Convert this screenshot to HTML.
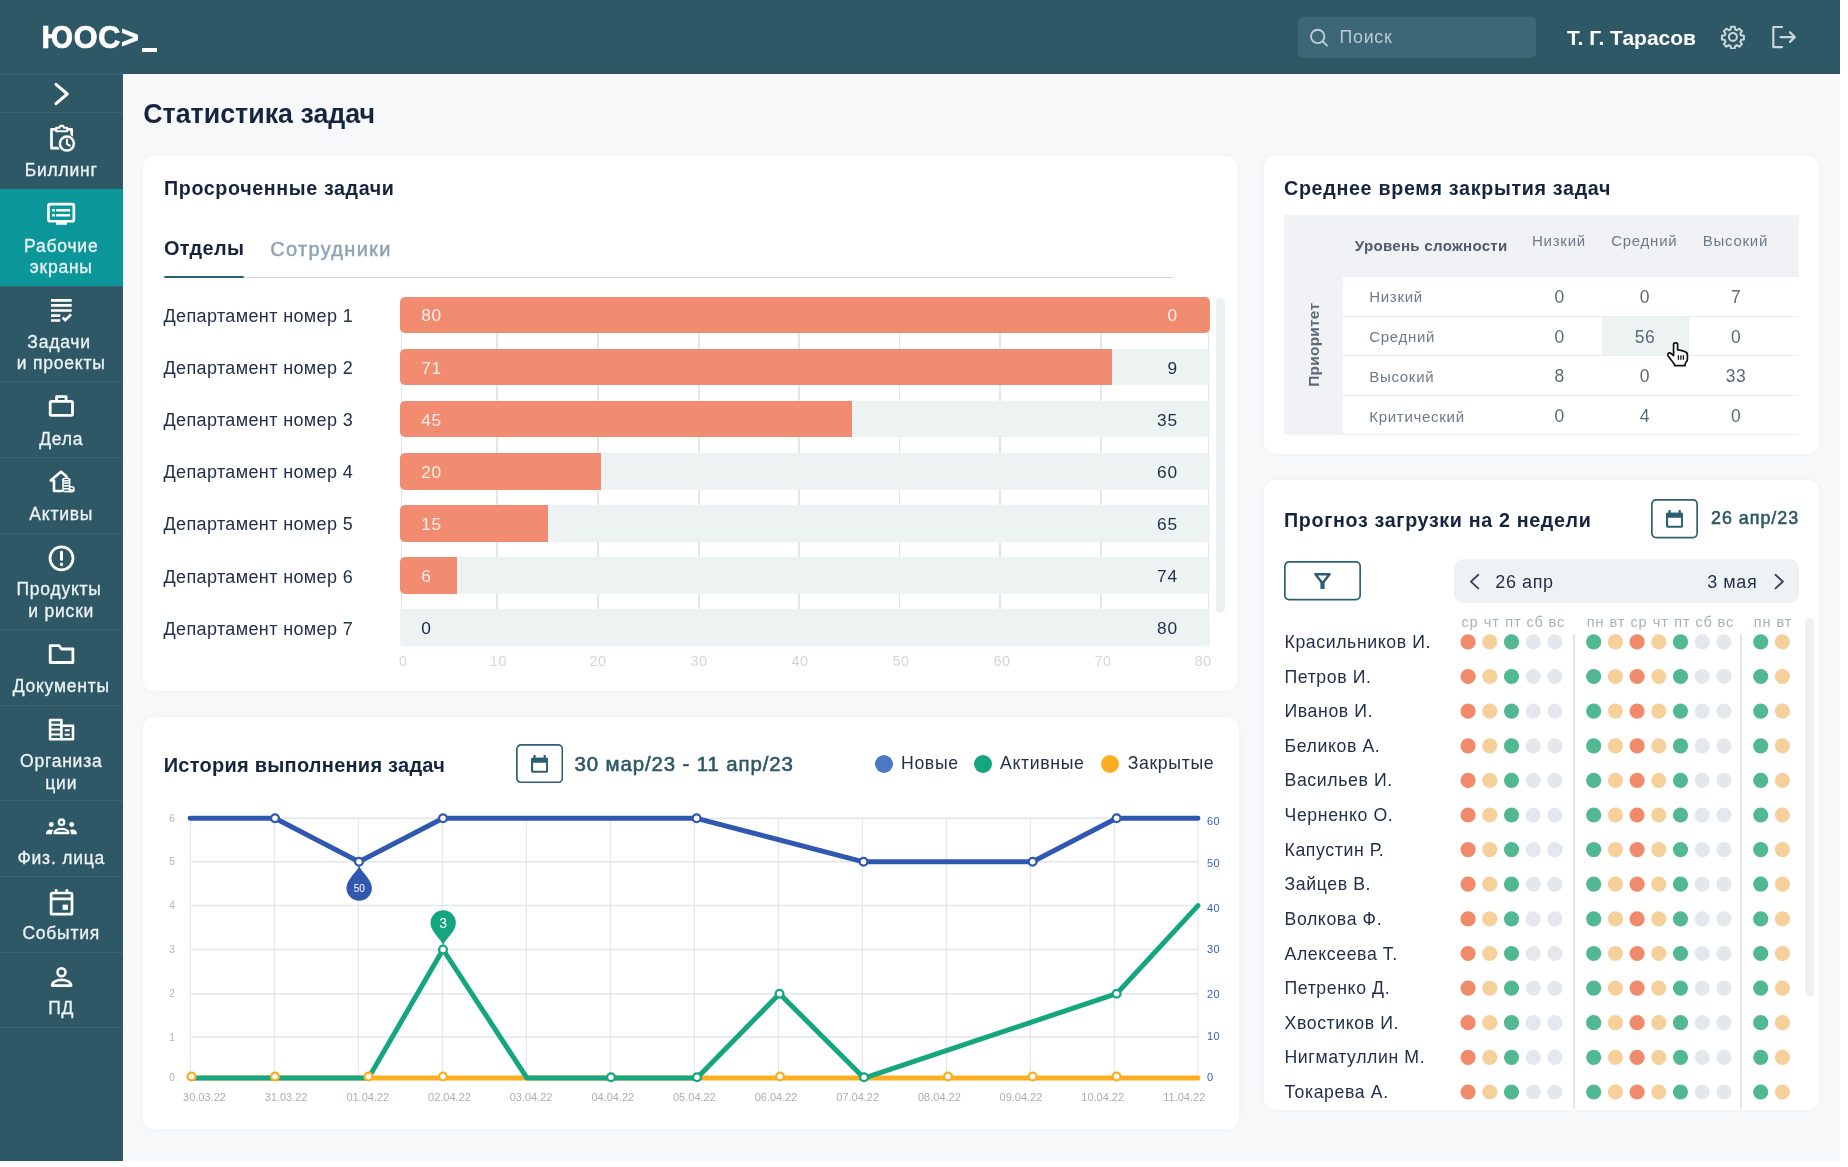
<!DOCTYPE html>
<html lang="ru"><head><meta charset="utf-8"><title>Статистика задач</title>
<style>
html,body{margin:0;padding:0;background:#fff;font-family:"Liberation Sans",sans-serif;}
body{width:1848px;height:1167px;overflow:hidden;position:relative;font-family:"Liberation Sans",sans-serif;}
#app{position:absolute;left:0;top:0;width:1840px;height:1161px;background:#f7f8fa;overflow:hidden;will-change:transform;}
.t{position:absolute;white-space:nowrap;line-height:1;}
.abs{position:absolute;}
.card{position:absolute;background:#fff;border-radius:11px;box-shadow:0 0 6px rgba(40,60,90,0.035);}
#hdr{position:absolute;left:0;top:0;width:1840px;height:74px;background:#2e5866;}
#side{position:absolute;left:0;top:74px;width:122.5px;height:1087px;background:#2e5866;}
.nav{position:absolute;left:0;width:122.5px;border-top:1px solid #3b6472;box-sizing:border-box;}
.nav .lbl{position:absolute;left:-20px;width:162.5px;text-align:center;color:#eef3f5;font-size:17.5px;letter-spacing:0.78px;-webkit-text-stroke:0.3px #eef3f5;line-height:1;white-space:nowrap;}
.nav svg{position:absolute;}
</style></head><body><div id="app">

<div id="hdr">
<div class="t " style="left:41.5px;top:21.6px;font-size:30.6px;color:#fff;font-weight:700;-webkit-text-stroke:0.7px #fff;letter-spacing:0.7px;">ЮОС&gt;</div>
<div class="abs" style="left:141.7px;top:48px;width:15.6px;height:4px;background:#fff"></div>
<div class="abs" style="left:1298.3px;top:17px;width:237.5px;height:40.5px;border-radius:5px;background:#3d6676;"></div>
<svg class="abs" style="left:1308px;top:26px" width="22" height="22" viewBox="0 0 22 22" fill="none" stroke="#bdd0d8" stroke-width="1.9" stroke-linecap="round"><circle cx="9.7" cy="10.4" r="6.7"/><path d="M15.2 15.8 L19 19.6"/></svg>
<div class="t " style="left:1339.5px;top:28.8px;font-size:17.8px;color:#b9ccd5;font-weight:400;letter-spacing:0.75px;">Поиск</div>
<div class="t " style="left:1567px;top:26.5px;font-size:21px;color:#fff;font-weight:700;">Т. Г. Тарасов</div>
<svg class="abs" style="left:1719.6px;top:23.5px" width="25.8" height="25.8" viewBox="0 0 24 24" fill="none" stroke="#c9d5d9" stroke-width="1.9" stroke-linejoin="round"><circle cx="12" cy="12" r="3.7"/><path d="M10.3 2.5h3.4l.5 2.6 1.6.7 2.2-1.5 2.4 2.4-1.5 2.2.7 1.6 2.6.5v3.4l-2.6.5-.7 1.6 1.5 2.2-2.4 2.4-2.2-1.5-1.6.7-.5 2.6h-3.4l-.5-2.6-1.6-.7-2.2 1.5-2.4-2.4 1.5-2.2-.7-1.6-2.6-.5v-3.4l2.6-.5.7-1.6-1.5-2.2 2.4-2.4 2.2 1.5 1.6-.7z"/></svg>
<svg class="abs" style="left:1770px;top:24px" width="30" height="26" viewBox="0 0 30 26" fill="none" stroke="#c9d5d9" stroke-width="2.2" stroke-linecap="round" stroke-linejoin="round"><path d="M12 3H3.3v20.2H12"/><path d="M10.5 13.1H24.5M20 8.3l4.8 4.8L20 17.9"/></svg>
</div>
<div id="side">
<div class="nav" style="top:-1px;height:2px;border-top:2px solid #39626f"></div>
<svg class="abs" style="left:50px;top:8px" width="22" height="26" viewBox="0 0 22 26" fill="none" stroke="#fff" stroke-width="3" stroke-linecap="round" stroke-linejoin="round"><path d="M6 2.3L17.3 12 6 21.7"/></svg>
<div class="nav" style="top:38px;height:77px;">
<svg style="left:46px;top:9px" width="32" height="32" viewBox="46 122 32 32" fill="none" stroke="#fff" stroke-width="2.7" stroke-linejoin="round" stroke-linecap="round"><path d="M62 148.2H51.5V129.4h4.5M67.5 129.4h4.2v8"/><path d="M56.2 131.3v-3.5h3.2l.9-1.9h2.8l.9 1.9h3.2v3.5z" stroke-width="2.1"/><circle cx="66.9" cy="143.6" r="9.4" fill="#2e5866" stroke="none"/><circle cx="66.9" cy="143.6" r="7" stroke-width="2.5"/><path d="M66.9 139.6v4.3l2.9 1.8" stroke-width="2"/></svg>
<div class="lbl" style="top:48.8px;">Биллинг</div>
</div>
<div class="nav" style="top:115px;height:97px;background:#0b979a;border-top-color:#0b979a;">
<svg style="left:44px;top:9px" width="36" height="30" viewBox="44 199 36 30" fill="none" stroke="#fff" stroke-width="2.7" stroke-linejoin="round"><rect x="48.45" y="204.15" width="25.4" height="17.1" rx="1.8"/><rect x="56.2" y="221.5" width="10.8" height="3.3" fill="#fff" stroke="none"/><path d="M56.2 210.2h13.9M56.2 215.3h13.9" stroke-width="2.5"/><path d="M52.2 210.2h2.7M52.2 215.3h2.7" stroke-width="2.5"/></svg>
<div class="lbl" style="top:47.8px;">Рабочие</div>
<div class="lbl" style="top:69.3px;">экраны</div>
</div>
<div class="nav" style="top:212px;height:95px;">
<svg style="left:46px;top:8px" width="32" height="30" viewBox="46 295 32 30" fill="none" stroke="#fff" stroke-width="2.7"><path d="M51 300.3h20.7M51 305.4h20.7M51 310.5h20.7M51 315.6h9.2M51 320.5h9.2"/><path d="M62.6 317.5l2.7 2.7 5.8-5.8" stroke-width="2.6"/></svg>
<div class="lbl" style="top:46.8px;margin-left:-2.2px;">Задачи</div>
<div class="lbl" style="top:68.3px;">и проекты</div>
</div>
<div class="nav" style="top:307px;height:76px;">
<svg style="left:46px;top:9px" width="32" height="30" viewBox="46 391 32 30" fill="none" stroke="#fff" stroke-width="2.8" stroke-linejoin="round"><rect x="50.2" y="401.3" width="22.3" height="14" rx="1.2"/><path d="M56.6 401.3v-4.6h9.5v4.6"/></svg>
<div class="lbl" style="top:48.8px;">Дела</div>
</div>
<div class="nav" style="top:383px;height:76px;">
<svg style="left:46px;top:9px" width="32" height="30" viewBox="46 467 32 30" fill="none" stroke="#fff" stroke-width="2.6" stroke-linejoin="round" stroke-linecap="round"><path d="M61.5 491H54V480.5h-3.3L61 471.8l5.6 4.8"/><g stroke-width="1.5"><ellipse cx="66.3" cy="479.5" rx="3.3" ry="1.3"/><path d="M63 479.5v11.3c0 1.1 6.6 1.1 6.6 0v-11.3M63 482.3c0 1.1 6.6 1.1 6.6 0M63 485.1c0 1.1 6.6 1.1 6.6 0M63 487.9c0 1.1 6.6 1.1 6.6 0"/><path d="M69.6 487c2.5-.4 4.3.2 4.3.9v2.9c0 1.1-4.2 1.4-5.6.5M69.6 489.8c1.3.6 4.3.3 4.3-.8"/></g></svg>
<div class="lbl" style="top:48.3px;">Активы</div>
</div>
<div class="nav" style="top:459px;height:96px;">
<svg style="left:46px;top:8px" width="32" height="32" viewBox="46 542 32 32" fill="none" stroke="#fff" stroke-width="2.7" stroke-linecap="round"><circle cx="61.5" cy="558.3" r="11.5"/><path d="M61.5 552v7.3" stroke-width="3"/><path d="M61.5 564.2v.3" stroke-width="3.2"/></svg>
<div class="lbl" style="top:47.3px;margin-left:-2.2px;">Продукты</div>
<div class="lbl" style="top:68.8px;">и риски</div>
</div>
<div class="nav" style="top:555px;height:76px;">
<svg style="left:46px;top:10px" width="32" height="28" viewBox="46 640 32 28" fill="none" stroke="#fff" stroke-width="2.8" stroke-linejoin="round"><path d="M50.2 662.5V645.7h8.8l2.5 3.3H72.9v13.5z"/></svg>
<div class="lbl" style="top:47.8px;">Документы</div>
</div>
<div class="nav" style="top:631px;height:95px;">
<svg style="left:46px;top:8px" width="32" height="30" viewBox="46 714 32 30" fill="none" stroke="#fff" stroke-width="2.6" stroke-linejoin="round"><path d="M50.1 739.2V720h11.3v19.2z"/><path d="M61.4 725.8h11.6v13.4H61.4"/><path d="M50.1 724.7h11.3M50.1 729.6h11.3M50.1 734.5h11.3" stroke-width="2"/><path d="M64.7 730.3h5M64.7 734.8h5" stroke-width="2.1"/></svg>
<div class="lbl" style="top:47.3px;">Организа</div>
<div class="lbl" style="top:68.8px;">ции</div>
</div>
<div class="nav" style="top:726px;height:76px;">
<svg style="left:43px;top:14px" width="37" height="22" viewBox="43 815 37 22" fill="none" stroke="#fff" stroke-width="2.3" stroke-linejoin="round"><circle cx="61.5" cy="822.2" r="2.7"/><path d="M54.5 833c0-5.4 14-5.4 14 0z"/><circle cx="51.3" cy="824.5" r="2.4" fill="#fff" stroke="none"/><circle cx="71.7" cy="824.5" r="2.4" fill="#fff" stroke="none"/><path d="M46 834.2c0-4.6 4.5-5.4 7.4-4.1-1 .9-1.5 2.3-1.5 4.1zM77 834.2c0-4.6-4.5-5.4-7.4-4.1 1 .9 1.5 2.3 1.5 4.1z" fill="#fff" stroke="none"/></svg>
<div class="lbl" style="top:48.8px;">Физ. лица</div>
</div>
<div class="nav" style="top:802px;height:76px;">
<svg style="left:46px;top:9px" width="32" height="32" viewBox="46 886 32 32" fill="none" stroke="#fff" stroke-width="2.7" stroke-linejoin="round"><rect x="51.1" y="893" width="20.9" height="21.2" rx="1.3"/><path d="M51.1 898.8h20.9M56.2 889.3v4.7M66.9 889.3v4.7"/><rect x="62.6" y="904.6" width="5.3" height="5.3" fill="#fff" stroke="none"/></svg>
<div class="lbl" style="top:48.3px;">События</div>
</div>
<div class="nav" style="top:878px;height:75px;">
<svg style="left:46px;top:9px" width="32" height="28" viewBox="46 962 32 28" fill="none" stroke="#fff" stroke-width="2.6" stroke-linejoin="round"><circle cx="61.5" cy="972.3" r="4"/><path d="M52.1 985.6c0-7.6 19-7.6 19 0z"/></svg>
<div class="lbl" style="top:47.3px;">ПД</div>
</div>
<div class="nav" style="top:953px;height:2px"></div>
</div>
<div class="t" style="left:143.2px;top:100.81px;font-size:26.8px;color:#16243f;font-weight:700;">Статистика задач</div>
<div class="card" style="left:142.5px;top:156px;width:1094px;height:535px"></div>
<div class="t" style="left:164px;top:178.72px;font-size:19.7px;color:#16243f;font-weight:700;letter-spacing:0.62px;">Просроченные задачи</div>
<div class="t" style="left:164px;top:238.95px;font-size:19.9px;color:#16243f;font-weight:700;letter-spacing:0.33px;">Отделы</div>
<div class="t" style="left:270.3px;top:238.57px;font-size:20px;color:#8fa2b3;letter-spacing:1.3px;-webkit-text-stroke:0.45px #8fa2b3;">Сотрудники</div>
<div class="abs" style="left:164px;top:277px;width:1010px;height:1.2px;background:#d3d8dd"></div>
<div class="abs" style="left:163.5px;top:275.6px;width:80.5px;height:2.4px;background:#27606f;border-radius:1px"></div>
<div class="abs" style="left:400.7px;top:297px;width:1.4px;height:349px;background:#e4e7ea"></div>
<div class="abs" style="left:496.4px;top:297px;width:1.4px;height:349px;background:#e4e7ea"></div>
<div class="abs" style="left:597.4px;top:297px;width:1.4px;height:349px;background:#e4e7ea"></div>
<div class="abs" style="left:698.4px;top:297px;width:1.4px;height:349px;background:#e4e7ea"></div>
<div class="abs" style="left:798.4px;top:297px;width:1.4px;height:349px;background:#e4e7ea"></div>
<div class="abs" style="left:898.9px;top:297px;width:1.4px;height:349px;background:#e4e7ea"></div>
<div class="abs" style="left:999.4px;top:297px;width:1.4px;height:349px;background:#e4e7ea"></div>
<div class="abs" style="left:1100.4px;top:297px;width:1.4px;height:349px;background:#e4e7ea"></div>
<div class="abs" style="left:1207.7px;top:297px;width:1.4px;height:349px;background:#e4e7ea"></div>
<div class="t" style="left:163.5px;top:306.86px;font-size:18px;color:#233049;letter-spacing:0.37px;">Департамент номер 1</div>
<div class="abs" style="left:400px;top:296.5px;width:810px;height:36.6px;background:#edf2f3;border-radius:5px"></div>
<div class="abs" style="left:400px;top:296.5px;width:810px;height:36.6px;background:#f28c70;border-radius:5px"></div>
<div class="t" style="left:421.2px;top:307.36px;font-size:17.3px;color:#fdeee9;letter-spacing:0.8px;">80</div>
<div class="t" style="right:662.2px;top:307.36px;font-size:17.3px;color:#fdeee9;letter-spacing:0.8px;">0</div>
<div class="t" style="left:163.5px;top:359.06px;font-size:18px;color:#233049;letter-spacing:0.37px;">Департамент номер 2</div>
<div class="abs" style="left:400px;top:348.7px;width:810px;height:36.6px;background:#edf2f3;border-radius:5px"></div>
<div class="abs" style="left:400px;top:348.7px;width:711.5px;height:36.6px;background:#f28c70;border-radius:5px 0 0 5px"></div>
<div class="t" style="left:421.2px;top:359.56px;font-size:17.3px;color:#fdeee9;letter-spacing:0.8px;">71</div>
<div class="t" style="right:662.2px;top:359.56px;font-size:17.3px;color:#1f2c44;letter-spacing:0.8px;">9</div>
<div class="t" style="left:163.5px;top:411.16px;font-size:18px;color:#233049;letter-spacing:0.37px;">Департамент номер 3</div>
<div class="abs" style="left:400px;top:400.8px;width:810px;height:36.6px;background:#edf2f3;border-radius:5px"></div>
<div class="abs" style="left:400px;top:400.8px;width:452px;height:36.6px;background:#f28c70;border-radius:5px 0 0 5px"></div>
<div class="t" style="left:421.2px;top:411.66px;font-size:17.3px;color:#fdeee9;letter-spacing:0.8px;">45</div>
<div class="t" style="right:662.2px;top:411.66px;font-size:17.3px;color:#1f2c44;letter-spacing:0.8px;">35</div>
<div class="t" style="left:163.5px;top:463.36px;font-size:18px;color:#233049;letter-spacing:0.37px;">Департамент номер 4</div>
<div class="abs" style="left:400px;top:453px;width:810px;height:36.6px;background:#edf2f3;border-radius:5px"></div>
<div class="abs" style="left:400px;top:453px;width:200.7px;height:36.6px;background:#f28c70;border-radius:5px 0 0 5px"></div>
<div class="t" style="left:421.2px;top:463.86px;font-size:17.3px;color:#fdeee9;letter-spacing:0.8px;">20</div>
<div class="t" style="right:662.2px;top:463.86px;font-size:17.3px;color:#1f2c44;letter-spacing:0.8px;">60</div>
<div class="t" style="left:163.5px;top:515.46px;font-size:18px;color:#233049;letter-spacing:0.37px;">Департамент номер 5</div>
<div class="abs" style="left:400px;top:505.1px;width:810px;height:36.6px;background:#edf2f3;border-radius:5px"></div>
<div class="abs" style="left:400px;top:505.1px;width:148px;height:36.6px;background:#f28c70;border-radius:5px 0 0 5px"></div>
<div class="t" style="left:421.2px;top:515.96px;font-size:17.3px;color:#fdeee9;letter-spacing:0.8px;">15</div>
<div class="t" style="right:662.2px;top:515.96px;font-size:17.3px;color:#1f2c44;letter-spacing:0.8px;">65</div>
<div class="t" style="left:163.5px;top:567.66px;font-size:18px;color:#233049;letter-spacing:0.37px;">Департамент номер 6</div>
<div class="abs" style="left:400px;top:557.3px;width:810px;height:36.6px;background:#edf2f3;border-radius:5px"></div>
<div class="abs" style="left:400px;top:557.3px;width:57.3px;height:36.6px;background:#f28c70;border-radius:5px 0 0 5px"></div>
<div class="t" style="left:421.2px;top:568.16px;font-size:17.3px;color:#fdeee9;letter-spacing:0.8px;">6</div>
<div class="t" style="right:662.2px;top:568.16px;font-size:17.3px;color:#1f2c44;letter-spacing:0.8px;">74</div>
<div class="t" style="left:163.5px;top:619.76px;font-size:18px;color:#233049;letter-spacing:0.37px;">Департамент номер 7</div>
<div class="abs" style="left:400px;top:609.4px;width:810px;height:36.6px;background:#edf2f3;border-radius:5px"></div>
<div class="t" style="left:421.2px;top:620.26px;font-size:17.3px;color:#16243f;letter-spacing:0.8px;">0</div>
<div class="t" style="right:662.2px;top:620.26px;font-size:17.3px;color:#1f2c44;letter-spacing:0.8px;">80</div>
<div class="t" style="left:253.3px;width:300px;text-align:center;top:653.73px;font-size:14.5px;color:#d2d6db;letter-spacing:0.5px;">0</div>
<div class="t" style="left:348.4px;width:300px;text-align:center;top:653.73px;font-size:14.5px;color:#d2d6db;letter-spacing:0.5px;">10</div>
<div class="t" style="left:448px;width:300px;text-align:center;top:653.73px;font-size:14.5px;color:#d2d6db;letter-spacing:0.5px;">20</div>
<div class="t" style="left:549px;width:300px;text-align:center;top:653.73px;font-size:14.5px;color:#d2d6db;letter-spacing:0.5px;">30</div>
<div class="t" style="left:650px;width:300px;text-align:center;top:653.73px;font-size:14.5px;color:#d2d6db;letter-spacing:0.5px;">40</div>
<div class="t" style="left:751px;width:300px;text-align:center;top:653.73px;font-size:14.5px;color:#d2d6db;letter-spacing:0.5px;">50</div>
<div class="t" style="left:852px;width:300px;text-align:center;top:653.73px;font-size:14.5px;color:#d2d6db;letter-spacing:0.5px;">60</div>
<div class="t" style="left:953px;width:300px;text-align:center;top:653.73px;font-size:14.5px;color:#d2d6db;letter-spacing:0.5px;">70</div>
<div class="t" style="left:1053px;width:300px;text-align:center;top:653.73px;font-size:14.5px;color:#d2d6db;letter-spacing:0.5px;">80</div>
<div class="abs" style="left:1215.5px;top:297.5px;width:9.5px;height:315px;background:#eef1f4;border-radius:5px"></div>
<div class="card" style="left:1264px;top:156px;width:555px;height:298px"></div>
<div class="t" style="left:1284px;top:179.32px;font-size:19.7px;color:#16243f;font-weight:700;letter-spacing:0.68px;">Среднее время закрытия задач</div>
<div class="abs" style="left:1284.2px;top:215px;width:514.8px;height:220px;background:#f0f2f6"></div>
<div class="abs" style="left:1342.8px;top:277px;width:456.2px;height:158px;background:#fff"></div>
<div class="abs" style="left:1601.8px;top:316.8px;width:87.5px;height:39px;background:#edf2f3"></div>
<div class="abs" style="left:1343px;top:316.09999999999997px;width:456px;height:1.2px;background:#ebeef1"></div>
<div class="abs" style="left:1343px;top:355.09999999999997px;width:456px;height:1.2px;background:#ebeef1"></div>
<div class="abs" style="left:1343px;top:394.59999999999997px;width:456px;height:1.2px;background:#ebeef1"></div>
<div class="abs" style="left:1343px;top:434.09999999999997px;width:456px;height:1.2px;background:#ebeef1"></div>
<div class="t" style="left:1354.8px;top:237.82px;font-size:15.1px;color:#4d5b6b;font-weight:700;letter-spacing:0.28px;">Уровень сложности</div>
<div class="t" style="left:1409px;width:300px;text-align:center;top:233.3px;font-size:15px;color:#6e7a87;letter-spacing:0.75px;">Низкий</div>
<div class="t" style="left:1494.3px;width:300px;text-align:center;top:233.3px;font-size:15px;color:#6e7a87;letter-spacing:0.75px;">Средний</div>
<div class="t" style="left:1585.4px;width:300px;text-align:center;top:233.3px;font-size:15px;color:#6e7a87;letter-spacing:0.75px;">Высокий</div>
<div class="t" style="left:1369.2px;top:288.9px;font-size:15px;color:#6e7a87;letter-spacing:0.72px;">Низкий</div>
<div class="t" style="left:1409.7px;width:300px;text-align:center;top:288.69px;font-size:17.5px;color:#5d6977;letter-spacing:0.6px;">0</div>
<div class="t" style="left:1495px;width:300px;text-align:center;top:288.69px;font-size:17.5px;color:#5d6977;letter-spacing:0.6px;">0</div>
<div class="t" style="left:1586.1000000000001px;width:300px;text-align:center;top:288.69px;font-size:17.5px;color:#5d6977;letter-spacing:0.6px;">7</div>
<div class="t" style="left:1369.2px;top:328.8px;font-size:15px;color:#6e7a87;letter-spacing:0.72px;">Средний</div>
<div class="t" style="left:1409.7px;width:300px;text-align:center;top:328.59px;font-size:17.5px;color:#5d6977;letter-spacing:0.6px;">0</div>
<div class="t" style="left:1495px;width:300px;text-align:center;top:328.59px;font-size:17.5px;color:#5d6977;letter-spacing:0.6px;">56</div>
<div class="t" style="left:1586.1000000000001px;width:300px;text-align:center;top:328.59px;font-size:17.5px;color:#5d6977;letter-spacing:0.6px;">0</div>
<div class="t" style="left:1369.2px;top:368.7px;font-size:15px;color:#6e7a87;letter-spacing:0.72px;">Высокий</div>
<div class="t" style="left:1409.7px;width:300px;text-align:center;top:368.49px;font-size:17.5px;color:#5d6977;letter-spacing:0.6px;">8</div>
<div class="t" style="left:1495px;width:300px;text-align:center;top:368.49px;font-size:17.5px;color:#5d6977;letter-spacing:0.6px;">0</div>
<div class="t" style="left:1586.1000000000001px;width:300px;text-align:center;top:368.49px;font-size:17.5px;color:#5d6977;letter-spacing:0.6px;">33</div>
<div class="t" style="left:1369.2px;top:408.6px;font-size:15px;color:#6e7a87;letter-spacing:0.72px;">Критический</div>
<div class="t" style="left:1409.7px;width:300px;text-align:center;top:408.39px;font-size:17.5px;color:#5d6977;letter-spacing:0.6px;">0</div>
<div class="t" style="left:1495px;width:300px;text-align:center;top:408.39px;font-size:17.5px;color:#5d6977;letter-spacing:0.6px;">4</div>
<div class="t" style="left:1586.1000000000001px;width:300px;text-align:center;top:408.39px;font-size:17.5px;color:#5d6977;letter-spacing:0.6px;">0</div>
<div class="t" style="left:1263.8px;top:337px;width:100px;text-align:center;font-size:15.5px;font-weight:700;color:#5d6977;transform:rotate(-90deg);transform-origin:50% 50%;letter-spacing:0.2px">Приоритет</div>
<svg class="abs" style="left:1660px;top:338px" width="34" height="32" viewBox="1660 338 34 32"><path d="M1673.6 344.3C1673.6 342.3 1677.6 342.3 1677.6 344.3V349.8L1681 350.4L1684.2 351.4C1686.5 352 1687.4 353.2 1687.4 355V359.5C1687.4 361.5 1685.2 362.5 1685.2 364V365.6H1674.4V364C1672.5 362 1670 358.5 1668.2 356C1667 354 1668.5 352.3 1670.3 353L1673.6 355.5Z" fill="#fff" stroke="#111" stroke-width="1.7" stroke-linejoin="round"/><path d="M1678.4 355.2V359.8M1680.9 355.2V359.8M1683.4 355.2V359.8" stroke="#111" stroke-width="1.3" fill="none"/></svg>
<div class="card" style="left:1264px;top:480px;width:555px;height:630px"></div>
<div class="t" style="left:1284px;top:510.92px;font-size:19.7px;color:#16243f;font-weight:700;letter-spacing:0.65px;">Прогноз загрузки на 2 недели</div>
<svg class="abs" style="left:1651px;top:499.3px" width="47" height="39.4"><rect x="0.85" y="0.85" width="45.3" height="37.7" rx="4.2" fill="#fff" stroke="#2d6173" stroke-width="1.7"/></svg>
<svg class="abs" style="left:1665.9px;top:510.1px" width="17.2" height="17.8" viewBox="0 0 17.2 17.8"><rect x="1.05" y="3.9" width="15.1" height="12.85" rx="1.1" fill="none" stroke="#2c5f71" stroke-width="2.1"/><rect x="0" y="2.8" width="17.2" height="4.9" rx="1.2" fill="#2c5f71"/><rect x="2.4" y="0" width="2.2" height="4" fill="#2c5f71"/><rect x="12.6" y="0" width="2.2" height="4" fill="#2c5f71"/></svg>
<div class="t" style="left:1711px;top:509.55px;font-size:17.9px;color:#2d5866;letter-spacing:0.98px;-webkit-text-stroke:0.55px #2d5866;">26 апр/23</div>
<svg class="abs" style="left:1284px;top:561.3px" width="77" height="39.4"><rect x="0.85" y="0.85" width="75.3" height="37.7" rx="4.2" fill="#fff" stroke="#2d6173" stroke-width="1.7"/></svg>
<svg class="abs" style="left:1310px;top:568px" width="26" height="26" viewBox="1310 568 26 26"><path d="M1315.4 574.2H1329.6L1322.5 583.2Z" fill="none" stroke="#2c5f71" stroke-width="2.5" stroke-linejoin="round"/><rect x="1320.4" y="581" width="4.2" height="8" rx="0.6" fill="#2c5f71"/></svg>
<div class="abs" style="left:1454px;top:558.9px;width:345px;height:44px;border-radius:9px;background:#eff2f5"></div>
<svg class="abs" style="left:1466px;top:571px" width="18" height="22" viewBox="0 0 18 22" fill="none" stroke="#34445b" stroke-width="1.9" stroke-linecap="round" stroke-linejoin="round"><path d="M12.3 3.8L4.9 10.6l7.4 6.8"/></svg>
<svg class="abs" style="left:1770px;top:571px" width="18" height="22" viewBox="0 0 18 22" fill="none" stroke="#34445b" stroke-width="1.9" stroke-linecap="round" stroke-linejoin="round"><path d="M5.5 3.8L12.9 10.6l-7.4 6.8"/></svg>
<div class="t" style="left:1495.3px;top:572.76px;font-size:18px;color:#23324b;letter-spacing:0.6px;">26 апр</div>
<div class="t" style="right:82.70000000000005px;top:572.76px;font-size:18px;color:#23324b;letter-spacing:0.6px;">3 мая</div>
<div class="abs" style="left:1573.1px;top:634px;width:1.9px;height:475px;background:#e4e7eb"></div>
<div class="abs" style="left:1740.1px;top:634px;width:1.9px;height:475px;background:#e4e7eb"></div>
<div class="abs" style="left:1805px;top:618px;width:9px;height:378px;background:#eef1f4;border-radius:5px"></div>
<div class="t" style="left:1320px;width:300px;text-align:center;top:614.73px;font-size:14.5px;color:#a9b1bb;letter-spacing:0.9px;">ср</div>
<div class="t" style="left:1341.7px;width:300px;text-align:center;top:614.73px;font-size:14.5px;color:#a9b1bb;letter-spacing:0.9px;">чт</div>
<div class="t" style="left:1363.4px;width:300px;text-align:center;top:614.73px;font-size:14.5px;color:#a9b1bb;letter-spacing:0.9px;">пт</div>
<div class="t" style="left:1385.1000000000001px;width:300px;text-align:center;top:614.73px;font-size:14.5px;color:#a9b1bb;letter-spacing:0.9px;">сб</div>
<div class="t" style="left:1406.8000000000002px;width:300px;text-align:center;top:614.73px;font-size:14.5px;color:#a9b1bb;letter-spacing:0.9px;">вс</div>
<div class="t" style="left:1445.6000000000001px;width:300px;text-align:center;top:614.73px;font-size:14.5px;color:#a9b1bb;letter-spacing:0.9px;">пн</div>
<div class="t" style="left:1467.3000000000002px;width:300px;text-align:center;top:614.73px;font-size:14.5px;color:#a9b1bb;letter-spacing:0.9px;">вт</div>
<div class="t" style="left:1489px;width:300px;text-align:center;top:614.73px;font-size:14.5px;color:#a9b1bb;letter-spacing:0.9px;">ср</div>
<div class="t" style="left:1510.7px;width:300px;text-align:center;top:614.73px;font-size:14.5px;color:#a9b1bb;letter-spacing:0.9px;">чт</div>
<div class="t" style="left:1532.4px;width:300px;text-align:center;top:614.73px;font-size:14.5px;color:#a9b1bb;letter-spacing:0.9px;">пт</div>
<div class="t" style="left:1554.1000000000001px;width:300px;text-align:center;top:614.73px;font-size:14.5px;color:#a9b1bb;letter-spacing:0.9px;">сб</div>
<div class="t" style="left:1575.8000000000002px;width:300px;text-align:center;top:614.73px;font-size:14.5px;color:#a9b1bb;letter-spacing:0.9px;">вс</div>
<div class="t" style="left:1612.6000000000001px;width:300px;text-align:center;top:614.73px;font-size:14.5px;color:#a9b1bb;letter-spacing:0.9px;">пн</div>
<div class="t" style="left:1634.3000000000002px;width:300px;text-align:center;top:614.73px;font-size:14.5px;color:#a9b1bb;letter-spacing:0.9px;">вт</div>
<div class="t" style="left:1284.5px;top:633.92px;font-size:17.7px;color:#233049;letter-spacing:0.6px;">Красильников И.</div>
<div class="t" style="left:1284.5px;top:668.54px;font-size:17.7px;color:#233049;letter-spacing:0.6px;">Петров И.</div>
<div class="t" style="left:1284.5px;top:703.16px;font-size:17.7px;color:#233049;letter-spacing:0.6px;">Иванов И.</div>
<div class="t" style="left:1284.5px;top:737.78px;font-size:17.7px;color:#233049;letter-spacing:0.6px;">Беликов А.</div>
<div class="t" style="left:1284.5px;top:772.4px;font-size:17.7px;color:#233049;letter-spacing:0.6px;">Васильев И.</div>
<div class="t" style="left:1284.5px;top:807.02px;font-size:17.7px;color:#233049;letter-spacing:0.6px;">Черненко О.</div>
<div class="t" style="left:1284.5px;top:841.64px;font-size:17.7px;color:#233049;letter-spacing:0.6px;">Капустин Р.</div>
<div class="t" style="left:1284.5px;top:876.26px;font-size:17.7px;color:#233049;letter-spacing:0.6px;">Зайцев В.</div>
<div class="t" style="left:1284.5px;top:910.88px;font-size:17.7px;color:#233049;letter-spacing:0.6px;">Волкова Ф.</div>
<div class="t" style="left:1284.5px;top:945.5px;font-size:17.7px;color:#233049;letter-spacing:0.6px;">Алексеева Т.</div>
<div class="t" style="left:1284.5px;top:980.12px;font-size:17.7px;color:#233049;letter-spacing:0.6px;">Петренко Д.</div>
<div class="t" style="left:1284.5px;top:1014.74px;font-size:17.7px;color:#233049;letter-spacing:0.6px;">Хвостиков И.</div>
<div class="t" style="left:1284.5px;top:1049.36px;font-size:17.7px;color:#233049;letter-spacing:0.6px;">Нигматуллин М.</div>
<div class="t" style="left:1284.5px;top:1083.98px;font-size:17.7px;color:#233049;letter-spacing:0.6px;">Токарева А.</div>
<svg class="abs" style="left:1455px;top:630px" width="345" height="475" viewBox="1455 630 345 475"><circle cx="1468.1" cy="641.9" r="7.6" fill="#f08a6a"/><circle cx="1489.8" cy="641.9" r="7.6" fill="#f6d09a"/><circle cx="1511.5" cy="641.9" r="7.6" fill="#52b892"/><circle cx="1533.2" cy="641.9" r="7.6" fill="#e4e7ec"/><circle cx="1554.9" cy="641.9" r="7.6" fill="#e4e7ec"/><circle cx="1593.7" cy="641.9" r="7.6" fill="#52b892"/><circle cx="1615.4" cy="641.9" r="7.6" fill="#f6d09a"/><circle cx="1637.1" cy="641.9" r="7.6" fill="#f08a6a"/><circle cx="1658.8" cy="641.9" r="7.6" fill="#f6d09a"/><circle cx="1680.5" cy="641.9" r="7.6" fill="#52b892"/><circle cx="1702.2" cy="641.9" r="7.6" fill="#e4e7ec"/><circle cx="1723.9" cy="641.9" r="7.6" fill="#e4e7ec"/><circle cx="1760.7" cy="641.9" r="7.6" fill="#52b892"/><circle cx="1782.4" cy="641.9" r="7.6" fill="#f6d09a"/><circle cx="1468.1" cy="676.5" r="7.6" fill="#f08a6a"/><circle cx="1489.8" cy="676.5" r="7.6" fill="#f6d09a"/><circle cx="1511.5" cy="676.5" r="7.6" fill="#52b892"/><circle cx="1533.2" cy="676.5" r="7.6" fill="#e4e7ec"/><circle cx="1554.9" cy="676.5" r="7.6" fill="#e4e7ec"/><circle cx="1593.7" cy="676.5" r="7.6" fill="#52b892"/><circle cx="1615.4" cy="676.5" r="7.6" fill="#f6d09a"/><circle cx="1637.1" cy="676.5" r="7.6" fill="#f08a6a"/><circle cx="1658.8" cy="676.5" r="7.6" fill="#f6d09a"/><circle cx="1680.5" cy="676.5" r="7.6" fill="#52b892"/><circle cx="1702.2" cy="676.5" r="7.6" fill="#e4e7ec"/><circle cx="1723.9" cy="676.5" r="7.6" fill="#e4e7ec"/><circle cx="1760.7" cy="676.5" r="7.6" fill="#52b892"/><circle cx="1782.4" cy="676.5" r="7.6" fill="#f6d09a"/><circle cx="1468.1" cy="711.1" r="7.6" fill="#f08a6a"/><circle cx="1489.8" cy="711.1" r="7.6" fill="#f6d09a"/><circle cx="1511.5" cy="711.1" r="7.6" fill="#52b892"/><circle cx="1533.2" cy="711.1" r="7.6" fill="#e4e7ec"/><circle cx="1554.9" cy="711.1" r="7.6" fill="#e4e7ec"/><circle cx="1593.7" cy="711.1" r="7.6" fill="#52b892"/><circle cx="1615.4" cy="711.1" r="7.6" fill="#f6d09a"/><circle cx="1637.1" cy="711.1" r="7.6" fill="#f08a6a"/><circle cx="1658.8" cy="711.1" r="7.6" fill="#f6d09a"/><circle cx="1680.5" cy="711.1" r="7.6" fill="#52b892"/><circle cx="1702.2" cy="711.1" r="7.6" fill="#e4e7ec"/><circle cx="1723.9" cy="711.1" r="7.6" fill="#e4e7ec"/><circle cx="1760.7" cy="711.1" r="7.6" fill="#52b892"/><circle cx="1782.4" cy="711.1" r="7.6" fill="#f6d09a"/><circle cx="1468.1" cy="745.8" r="7.6" fill="#f08a6a"/><circle cx="1489.8" cy="745.8" r="7.6" fill="#f6d09a"/><circle cx="1511.5" cy="745.8" r="7.6" fill="#52b892"/><circle cx="1533.2" cy="745.8" r="7.6" fill="#e4e7ec"/><circle cx="1554.9" cy="745.8" r="7.6" fill="#e4e7ec"/><circle cx="1593.7" cy="745.8" r="7.6" fill="#52b892"/><circle cx="1615.4" cy="745.8" r="7.6" fill="#f6d09a"/><circle cx="1637.1" cy="745.8" r="7.6" fill="#f08a6a"/><circle cx="1658.8" cy="745.8" r="7.6" fill="#f6d09a"/><circle cx="1680.5" cy="745.8" r="7.6" fill="#52b892"/><circle cx="1702.2" cy="745.8" r="7.6" fill="#e4e7ec"/><circle cx="1723.9" cy="745.8" r="7.6" fill="#e4e7ec"/><circle cx="1760.7" cy="745.8" r="7.6" fill="#52b892"/><circle cx="1782.4" cy="745.8" r="7.6" fill="#f6d09a"/><circle cx="1468.1" cy="780.4" r="7.6" fill="#f08a6a"/><circle cx="1489.8" cy="780.4" r="7.6" fill="#f6d09a"/><circle cx="1511.5" cy="780.4" r="7.6" fill="#52b892"/><circle cx="1533.2" cy="780.4" r="7.6" fill="#e4e7ec"/><circle cx="1554.9" cy="780.4" r="7.6" fill="#e4e7ec"/><circle cx="1593.7" cy="780.4" r="7.6" fill="#52b892"/><circle cx="1615.4" cy="780.4" r="7.6" fill="#f6d09a"/><circle cx="1637.1" cy="780.4" r="7.6" fill="#f08a6a"/><circle cx="1658.8" cy="780.4" r="7.6" fill="#f6d09a"/><circle cx="1680.5" cy="780.4" r="7.6" fill="#52b892"/><circle cx="1702.2" cy="780.4" r="7.6" fill="#e4e7ec"/><circle cx="1723.9" cy="780.4" r="7.6" fill="#e4e7ec"/><circle cx="1760.7" cy="780.4" r="7.6" fill="#52b892"/><circle cx="1782.4" cy="780.4" r="7.6" fill="#f6d09a"/><circle cx="1468.1" cy="815" r="7.6" fill="#f08a6a"/><circle cx="1489.8" cy="815" r="7.6" fill="#f6d09a"/><circle cx="1511.5" cy="815" r="7.6" fill="#52b892"/><circle cx="1533.2" cy="815" r="7.6" fill="#e4e7ec"/><circle cx="1554.9" cy="815" r="7.6" fill="#e4e7ec"/><circle cx="1593.7" cy="815" r="7.6" fill="#52b892"/><circle cx="1615.4" cy="815" r="7.6" fill="#f6d09a"/><circle cx="1637.1" cy="815" r="7.6" fill="#f08a6a"/><circle cx="1658.8" cy="815" r="7.6" fill="#f6d09a"/><circle cx="1680.5" cy="815" r="7.6" fill="#52b892"/><circle cx="1702.2" cy="815" r="7.6" fill="#e4e7ec"/><circle cx="1723.9" cy="815" r="7.6" fill="#e4e7ec"/><circle cx="1760.7" cy="815" r="7.6" fill="#52b892"/><circle cx="1782.4" cy="815" r="7.6" fill="#f6d09a"/><circle cx="1468.1" cy="849.6" r="7.6" fill="#f08a6a"/><circle cx="1489.8" cy="849.6" r="7.6" fill="#f6d09a"/><circle cx="1511.5" cy="849.6" r="7.6" fill="#52b892"/><circle cx="1533.2" cy="849.6" r="7.6" fill="#e4e7ec"/><circle cx="1554.9" cy="849.6" r="7.6" fill="#e4e7ec"/><circle cx="1593.7" cy="849.6" r="7.6" fill="#52b892"/><circle cx="1615.4" cy="849.6" r="7.6" fill="#f6d09a"/><circle cx="1637.1" cy="849.6" r="7.6" fill="#f08a6a"/><circle cx="1658.8" cy="849.6" r="7.6" fill="#f6d09a"/><circle cx="1680.5" cy="849.6" r="7.6" fill="#52b892"/><circle cx="1702.2" cy="849.6" r="7.6" fill="#e4e7ec"/><circle cx="1723.9" cy="849.6" r="7.6" fill="#e4e7ec"/><circle cx="1760.7" cy="849.6" r="7.6" fill="#52b892"/><circle cx="1782.4" cy="849.6" r="7.6" fill="#f6d09a"/><circle cx="1468.1" cy="884.2" r="7.6" fill="#f08a6a"/><circle cx="1489.8" cy="884.2" r="7.6" fill="#f6d09a"/><circle cx="1511.5" cy="884.2" r="7.6" fill="#52b892"/><circle cx="1533.2" cy="884.2" r="7.6" fill="#e4e7ec"/><circle cx="1554.9" cy="884.2" r="7.6" fill="#e4e7ec"/><circle cx="1593.7" cy="884.2" r="7.6" fill="#52b892"/><circle cx="1615.4" cy="884.2" r="7.6" fill="#f6d09a"/><circle cx="1637.1" cy="884.2" r="7.6" fill="#f08a6a"/><circle cx="1658.8" cy="884.2" r="7.6" fill="#f6d09a"/><circle cx="1680.5" cy="884.2" r="7.6" fill="#52b892"/><circle cx="1702.2" cy="884.2" r="7.6" fill="#e4e7ec"/><circle cx="1723.9" cy="884.2" r="7.6" fill="#e4e7ec"/><circle cx="1760.7" cy="884.2" r="7.6" fill="#52b892"/><circle cx="1782.4" cy="884.2" r="7.6" fill="#f6d09a"/><circle cx="1468.1" cy="918.9" r="7.6" fill="#f08a6a"/><circle cx="1489.8" cy="918.9" r="7.6" fill="#f6d09a"/><circle cx="1511.5" cy="918.9" r="7.6" fill="#52b892"/><circle cx="1533.2" cy="918.9" r="7.6" fill="#e4e7ec"/><circle cx="1554.9" cy="918.9" r="7.6" fill="#e4e7ec"/><circle cx="1593.7" cy="918.9" r="7.6" fill="#52b892"/><circle cx="1615.4" cy="918.9" r="7.6" fill="#f6d09a"/><circle cx="1637.1" cy="918.9" r="7.6" fill="#f08a6a"/><circle cx="1658.8" cy="918.9" r="7.6" fill="#f6d09a"/><circle cx="1680.5" cy="918.9" r="7.6" fill="#52b892"/><circle cx="1702.2" cy="918.9" r="7.6" fill="#e4e7ec"/><circle cx="1723.9" cy="918.9" r="7.6" fill="#e4e7ec"/><circle cx="1760.7" cy="918.9" r="7.6" fill="#52b892"/><circle cx="1782.4" cy="918.9" r="7.6" fill="#f6d09a"/><circle cx="1468.1" cy="953.5" r="7.6" fill="#f08a6a"/><circle cx="1489.8" cy="953.5" r="7.6" fill="#f6d09a"/><circle cx="1511.5" cy="953.5" r="7.6" fill="#52b892"/><circle cx="1533.2" cy="953.5" r="7.6" fill="#e4e7ec"/><circle cx="1554.9" cy="953.5" r="7.6" fill="#e4e7ec"/><circle cx="1593.7" cy="953.5" r="7.6" fill="#52b892"/><circle cx="1615.4" cy="953.5" r="7.6" fill="#f6d09a"/><circle cx="1637.1" cy="953.5" r="7.6" fill="#f08a6a"/><circle cx="1658.8" cy="953.5" r="7.6" fill="#f6d09a"/><circle cx="1680.5" cy="953.5" r="7.6" fill="#52b892"/><circle cx="1702.2" cy="953.5" r="7.6" fill="#e4e7ec"/><circle cx="1723.9" cy="953.5" r="7.6" fill="#e4e7ec"/><circle cx="1760.7" cy="953.5" r="7.6" fill="#52b892"/><circle cx="1782.4" cy="953.5" r="7.6" fill="#f6d09a"/><circle cx="1468.1" cy="988.1" r="7.6" fill="#f08a6a"/><circle cx="1489.8" cy="988.1" r="7.6" fill="#f6d09a"/><circle cx="1511.5" cy="988.1" r="7.6" fill="#52b892"/><circle cx="1533.2" cy="988.1" r="7.6" fill="#e4e7ec"/><circle cx="1554.9" cy="988.1" r="7.6" fill="#e4e7ec"/><circle cx="1593.7" cy="988.1" r="7.6" fill="#52b892"/><circle cx="1615.4" cy="988.1" r="7.6" fill="#f6d09a"/><circle cx="1637.1" cy="988.1" r="7.6" fill="#f08a6a"/><circle cx="1658.8" cy="988.1" r="7.6" fill="#f6d09a"/><circle cx="1680.5" cy="988.1" r="7.6" fill="#52b892"/><circle cx="1702.2" cy="988.1" r="7.6" fill="#e4e7ec"/><circle cx="1723.9" cy="988.1" r="7.6" fill="#e4e7ec"/><circle cx="1760.7" cy="988.1" r="7.6" fill="#52b892"/><circle cx="1782.4" cy="988.1" r="7.6" fill="#f6d09a"/><circle cx="1468.1" cy="1022.7" r="7.6" fill="#f08a6a"/><circle cx="1489.8" cy="1022.7" r="7.6" fill="#f6d09a"/><circle cx="1511.5" cy="1022.7" r="7.6" fill="#52b892"/><circle cx="1533.2" cy="1022.7" r="7.6" fill="#e4e7ec"/><circle cx="1554.9" cy="1022.7" r="7.6" fill="#e4e7ec"/><circle cx="1593.7" cy="1022.7" r="7.6" fill="#52b892"/><circle cx="1615.4" cy="1022.7" r="7.6" fill="#f6d09a"/><circle cx="1637.1" cy="1022.7" r="7.6" fill="#f08a6a"/><circle cx="1658.8" cy="1022.7" r="7.6" fill="#f6d09a"/><circle cx="1680.5" cy="1022.7" r="7.6" fill="#52b892"/><circle cx="1702.2" cy="1022.7" r="7.6" fill="#e4e7ec"/><circle cx="1723.9" cy="1022.7" r="7.6" fill="#e4e7ec"/><circle cx="1760.7" cy="1022.7" r="7.6" fill="#52b892"/><circle cx="1782.4" cy="1022.7" r="7.6" fill="#f6d09a"/><circle cx="1468.1" cy="1057.3" r="7.6" fill="#f08a6a"/><circle cx="1489.8" cy="1057.3" r="7.6" fill="#f6d09a"/><circle cx="1511.5" cy="1057.3" r="7.6" fill="#52b892"/><circle cx="1533.2" cy="1057.3" r="7.6" fill="#e4e7ec"/><circle cx="1554.9" cy="1057.3" r="7.6" fill="#e4e7ec"/><circle cx="1593.7" cy="1057.3" r="7.6" fill="#52b892"/><circle cx="1615.4" cy="1057.3" r="7.6" fill="#f6d09a"/><circle cx="1637.1" cy="1057.3" r="7.6" fill="#f08a6a"/><circle cx="1658.8" cy="1057.3" r="7.6" fill="#f6d09a"/><circle cx="1680.5" cy="1057.3" r="7.6" fill="#52b892"/><circle cx="1702.2" cy="1057.3" r="7.6" fill="#e4e7ec"/><circle cx="1723.9" cy="1057.3" r="7.6" fill="#e4e7ec"/><circle cx="1760.7" cy="1057.3" r="7.6" fill="#52b892"/><circle cx="1782.4" cy="1057.3" r="7.6" fill="#f6d09a"/><circle cx="1468.1" cy="1092" r="7.6" fill="#f08a6a"/><circle cx="1489.8" cy="1092" r="7.6" fill="#f6d09a"/><circle cx="1511.5" cy="1092" r="7.6" fill="#52b892"/><circle cx="1533.2" cy="1092" r="7.6" fill="#e4e7ec"/><circle cx="1554.9" cy="1092" r="7.6" fill="#e4e7ec"/><circle cx="1593.7" cy="1092" r="7.6" fill="#52b892"/><circle cx="1615.4" cy="1092" r="7.6" fill="#f6d09a"/><circle cx="1637.1" cy="1092" r="7.6" fill="#f08a6a"/><circle cx="1658.8" cy="1092" r="7.6" fill="#f6d09a"/><circle cx="1680.5" cy="1092" r="7.6" fill="#52b892"/><circle cx="1702.2" cy="1092" r="7.6" fill="#e4e7ec"/><circle cx="1723.9" cy="1092" r="7.6" fill="#e4e7ec"/><circle cx="1760.7" cy="1092" r="7.6" fill="#52b892"/><circle cx="1782.4" cy="1092" r="7.6" fill="#f6d09a"/></svg>
<div class="card" style="left:142.5px;top:717.4px;width:1096.5px;height:411.6px"></div>
<div class="t" style="left:163.7px;top:754.97px;font-size:20px;color:#16243f;font-weight:700;letter-spacing:0.25px;">История выполнения задач</div>
<svg class="abs" style="left:516.3px;top:744.2px" width="47.2" height="39.2"><rect x="0.85" y="0.85" width="45.5" height="37.5" rx="4.2" fill="#fff" stroke="#2d6173" stroke-width="1.7"/></svg>
<svg class="abs" style="left:531.3px;top:755px" width="17.2" height="17.8" viewBox="0 0 17.2 17.8"><rect x="1.05" y="3.9" width="15.1" height="12.85" rx="1.1" fill="none" stroke="#2c5f71" stroke-width="2.1"/><rect x="0" y="2.8" width="17.2" height="4.9" rx="1.2" fill="#2c5f71"/><rect x="2.4" y="0" width="2.2" height="4" fill="#2c5f71"/><rect x="12.6" y="0" width="2.2" height="4" fill="#2c5f71"/></svg>
<div class="t" style="left:574.5px;top:753.83px;font-size:20.4px;color:#2d5866;letter-spacing:0.9px;-webkit-text-stroke:0.6px #2d5866;">30 мар/23 - 11 апр/23</div>
<div class="abs" style="left:874.5999999999999px;top:755px;width:18.4px;height:18.4px;border-radius:50%;background:#4a78c2"></div>
<div class="t" style="left:901px;top:755.02px;font-size:17.7px;color:#233049;letter-spacing:0.63px;">Новые</div>
<div class="abs" style="left:973.6999999999999px;top:755px;width:18.4px;height:18.4px;border-radius:50%;background:#15a67f"></div>
<div class="t" style="left:1000px;top:755.02px;font-size:17.7px;color:#233049;letter-spacing:0.63px;">Активные</div>
<div class="abs" style="left:1100.8px;top:755px;width:18.4px;height:18.4px;border-radius:50%;background:#fbae22"></div>
<div class="t" style="left:1127.7px;top:755.02px;font-size:17.7px;color:#233049;letter-spacing:0.63px;">Закрытые</div>
<svg class="abs" style="left:143px;top:790px" width="1095" height="330" viewBox="143 790 1095 330"><path d="M190.4 1077.3H1198" stroke="#e2e5e9" stroke-width="1.5"/><path d="M190.4 1037.1H1198" stroke="#e2e5e9" stroke-width="1.5"/><path d="M190.4 993.7H1198" stroke="#e2e5e9" stroke-width="1.5"/><path d="M190.4 949.5H1198" stroke="#e2e5e9" stroke-width="1.5"/><path d="M190.4 905.6H1198" stroke="#e2e5e9" stroke-width="1.5"/><path d="M190.4 861.8H1198" stroke="#e2e5e9" stroke-width="1.5"/><path d="M190.4 818.3H1198" stroke="#e2e5e9" stroke-width="1.5"/><path d="M190.4 818.3V1077.3" stroke="#e3e6ea" stroke-width="1.2"/><path d="M274.4 818.3V1077.3" stroke="#e3e6ea" stroke-width="1.2"/><path d="M358.4 818.3V1077.3" stroke="#e3e6ea" stroke-width="1.2"/><path d="M442.4 818.3V1077.3" stroke="#e3e6ea" stroke-width="1.2"/><path d="M526.4 818.3V1077.3" stroke="#e3e6ea" stroke-width="1.2"/><path d="M610.4 818.3V1077.3" stroke="#e3e6ea" stroke-width="1.2"/><path d="M694.4 818.3V1077.3" stroke="#e3e6ea" stroke-width="1.2"/><path d="M778.4 818.3V1077.3" stroke="#e3e6ea" stroke-width="1.2"/><path d="M862.4 818.3V1077.3" stroke="#e3e6ea" stroke-width="1.2"/><path d="M946.4 818.3V1077.3" stroke="#e3e6ea" stroke-width="1.2"/><path d="M1030.4 818.3V1077.3" stroke="#e3e6ea" stroke-width="1.2"/><path d="M1114.4 818.3V1077.3" stroke="#e3e6ea" stroke-width="1.2"/><path d="M1198 818.3V1077.3" stroke="#e3e6ea" stroke-width="1.2"/><path d="M190.4 1078.1H1198" stroke="#fbae22" stroke-width="5" stroke-linecap="round"/><path d="M190 1078.1 L368.5 1078.1 L443 949.5 L527 1078.1 L611 1078.1 L697 1078.1 L779.5 993.7 L864 1078.1 L1116.6 993.7 L1198 905.6" stroke="#15a67f" stroke-width="5" fill="none" stroke-linejoin="round" stroke-linecap="round"/><path d="M190 818.3 L275 818.3 L359 861.8 L443 818.3 L696.6 818.3 L863.5 861.8 L1032.6 861.8 L1116.6 818.3 L1198 818.3" stroke="#3058b0" stroke-width="4.9" fill="none" stroke-linejoin="round" stroke-linecap="round"/><circle cx="275" cy="818.3" r="3.9" fill="#fff" stroke="#3058b0" stroke-width="2.3"/><circle cx="359" cy="861.8" r="3.9" fill="#fff" stroke="#3058b0" stroke-width="2.3"/><circle cx="443" cy="818.3" r="3.9" fill="#fff" stroke="#3058b0" stroke-width="2.3"/><circle cx="696.6" cy="818.3" r="3.9" fill="#fff" stroke="#3058b0" stroke-width="2.3"/><circle cx="863.5" cy="861.8" r="3.9" fill="#fff" stroke="#3058b0" stroke-width="2.3"/><circle cx="1032.6" cy="861.8" r="3.9" fill="#fff" stroke="#3058b0" stroke-width="2.3"/><circle cx="1116.6" cy="818.3" r="3.9" fill="#fff" stroke="#3058b0" stroke-width="2.3"/><circle cx="443" cy="949.5" r="3.9" fill="#fff" stroke="#15a67f" stroke-width="2.3"/><circle cx="611" cy="1077.3" r="3.9" fill="#fff" stroke="#15a67f" stroke-width="2.3"/><circle cx="697" cy="1077.3" r="3.9" fill="#fff" stroke="#15a67f" stroke-width="2.3"/><circle cx="779.5" cy="993.7" r="3.9" fill="#fff" stroke="#15a67f" stroke-width="2.3"/><circle cx="864" cy="1077.3" r="3.9" fill="#fff" stroke="#15a67f" stroke-width="2.3"/><circle cx="1116.6" cy="993.7" r="3.9" fill="#fff" stroke="#15a67f" stroke-width="2.3"/><circle cx="191.5" cy="1076.5" r="3.9" fill="#fff" stroke="#fbae22" stroke-width="2.3"/><circle cx="275" cy="1076.5" r="3.9" fill="#fff" stroke="#fbae22" stroke-width="2.3"/><circle cx="368.5" cy="1076.5" r="3.9" fill="#fff" stroke="#fbae22" stroke-width="2.3"/><circle cx="443" cy="1076.5" r="3.9" fill="#fff" stroke="#fbae22" stroke-width="2.3"/><circle cx="780" cy="1076.5" r="3.9" fill="#fff" stroke="#fbae22" stroke-width="2.3"/><circle cx="948" cy="1076.5" r="3.9" fill="#fff" stroke="#fbae22" stroke-width="2.3"/><circle cx="1032.6" cy="1076.5" r="3.9" fill="#fff" stroke="#fbae22" stroke-width="2.3"/><circle cx="1116.6" cy="1076.5" r="3.9" fill="#fff" stroke="#fbae22" stroke-width="2.3"/><path d="M359.2 865.5 C 357.5 872 346.5 879 346.5 888 a12.7 12.7 0 0 0 25.4 0 C 371.9 879 360.9 872 359.2 865.5z" fill="#3058b0"/><text x="359.2" y="891.5" font-size="10" fill="#fff" text-anchor="middle" font-family="Liberation Sans, sans-serif">50</text><path d="M443.2 945.5 C 441.5 939 430.5 932 430.5 923 a12.7 12.7 0 0 1 25.4 0 C 455.9 932 444.9 939 443.2 945.5z" fill="#15a67f"/><text x="443.2" y="927.8" font-size="14" fill="#fff" text-anchor="middle" font-family="Liberation Sans, sans-serif">3</text><text x="172" y="1080.9" font-size="10.2" fill="#adb5c1" text-anchor="middle" font-family="Liberation Sans, sans-serif">0</text><text x="1207" y="1080.9" font-size="11" fill="#3560c4" font-family="Liberation Sans, sans-serif" letter-spacing="0.3">0</text><text x="172" y="1040.7" font-size="10.2" fill="#adb5c1" text-anchor="middle" font-family="Liberation Sans, sans-serif">1</text><text x="1207" y="1040.4" font-size="11" fill="#3560c4" font-family="Liberation Sans, sans-serif" letter-spacing="0.3">10</text><text x="172" y="997.3" font-size="10.2" fill="#adb5c1" text-anchor="middle" font-family="Liberation Sans, sans-serif">2</text><text x="1207" y="998.3" font-size="11" fill="#3560c4" font-family="Liberation Sans, sans-serif" letter-spacing="0.3">20</text><text x="172" y="953.1" font-size="10.2" fill="#adb5c1" text-anchor="middle" font-family="Liberation Sans, sans-serif">3</text><text x="1207" y="952.7" font-size="11" fill="#3560c4" font-family="Liberation Sans, sans-serif" letter-spacing="0.3">30</text><text x="172" y="909.2" font-size="10.2" fill="#adb5c1" text-anchor="middle" font-family="Liberation Sans, sans-serif">4</text><text x="1207" y="911.8" font-size="11" fill="#3560c4" font-family="Liberation Sans, sans-serif" letter-spacing="0.3">40</text><text x="172" y="865.4" font-size="10.2" fill="#adb5c1" text-anchor="middle" font-family="Liberation Sans, sans-serif">5</text><text x="1207" y="866.8" font-size="11" fill="#3560c4" font-family="Liberation Sans, sans-serif" letter-spacing="0.3">50</text><text x="172" y="821.9" font-size="10.2" fill="#adb5c1" text-anchor="middle" font-family="Liberation Sans, sans-serif">6</text><text x="1207" y="824.8" font-size="11" fill="#3560c4" font-family="Liberation Sans, sans-serif" letter-spacing="0.3">60</text><text x="204.5" y="1100.5" font-size="11" fill="#a6aeba" text-anchor="middle" font-family="Liberation Sans, sans-serif">30.03.22</text><text x="286.1" y="1100.5" font-size="11" fill="#a6aeba" text-anchor="middle" font-family="Liberation Sans, sans-serif">31.03.22</text><text x="367.8" y="1100.5" font-size="11" fill="#a6aeba" text-anchor="middle" font-family="Liberation Sans, sans-serif">01.04.22</text><text x="449.5" y="1100.5" font-size="11" fill="#a6aeba" text-anchor="middle" font-family="Liberation Sans, sans-serif">02.04.22</text><text x="531.1" y="1100.5" font-size="11" fill="#a6aeba" text-anchor="middle" font-family="Liberation Sans, sans-serif">03.04.22</text><text x="612.8" y="1100.5" font-size="11" fill="#a6aeba" text-anchor="middle" font-family="Liberation Sans, sans-serif">04.04.22</text><text x="694.4" y="1100.5" font-size="11" fill="#a6aeba" text-anchor="middle" font-family="Liberation Sans, sans-serif">05.04.22</text><text x="776.1" y="1100.5" font-size="11" fill="#a6aeba" text-anchor="middle" font-family="Liberation Sans, sans-serif">06.04.22</text><text x="857.7" y="1100.5" font-size="11" fill="#a6aeba" text-anchor="middle" font-family="Liberation Sans, sans-serif">07.04.22</text><text x="939.4" y="1100.5" font-size="11" fill="#a6aeba" text-anchor="middle" font-family="Liberation Sans, sans-serif">08.04.22</text><text x="1021" y="1100.5" font-size="11" fill="#a6aeba" text-anchor="middle" font-family="Liberation Sans, sans-serif">09.04.22</text><text x="1102.7" y="1100.5" font-size="11" fill="#a6aeba" text-anchor="middle" font-family="Liberation Sans, sans-serif">10.04.22</text><text x="1184.3" y="1100.5" font-size="11" fill="#a6aeba" text-anchor="middle" font-family="Liberation Sans, sans-serif">11.04.22</text></svg>
</div></body></html>
